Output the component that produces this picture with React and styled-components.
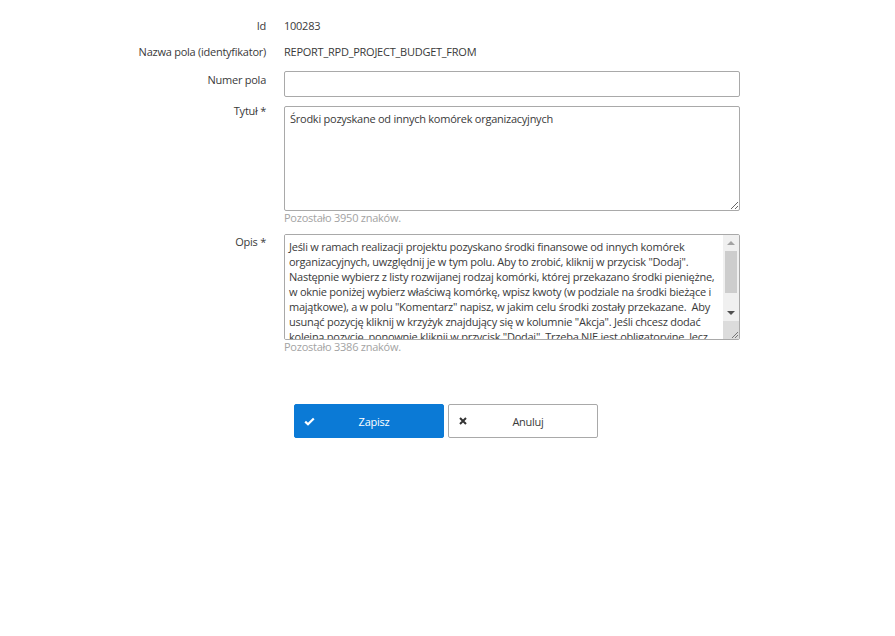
import React from 'react';
import styled, { createGlobalStyle } from 'styled-components';

const GlobalStyle = createGlobalStyle`
  html, body {
    margin: 0;
    padding: 0;
    background: #fff;
  }
  body {
    font-family: "Open Sans", "Liberation Sans", sans-serif;
    font-size: 11px;
    letter-spacing: -0.25px;
    color: #3a3a3a;
  }
  input, textarea, button {
    letter-spacing: inherit;
  }
`;

const Form = styled.div`
  padding-top: 17px;
  display: flex;
  flex-direction: column;
`;

const Row = styled.div`
  display: grid;
  grid-template-columns: 266px 456px;
  column-gap: 18px;
  align-items: start;
  margin-bottom: ${props => props.gap || 8}px;
`;

const Label = styled.div`
  text-align: right;
  line-height: 18px;
  margin-top: ${props => props.shift || 0}px;
`;

const Value = styled.div`
  line-height: 18px;
`;

const Field = styled.div`
  display: flex;
  flex-direction: column;
`;

const TextInput = styled.input`
  box-sizing: border-box;
  width: 456px;
  height: 26px;
  border: 1px solid #a9a9a9;
  border-radius: 2px;
  padding: 0 6px;
  font: inherit;
  color: inherit;
  outline: none;
`;

const TextArea = styled.textarea`
  box-sizing: border-box;
  width: 456px;
  height: ${props => props.h}px;
  border: 1px solid #a9a9a9;
  border-radius: 2px;
  padding: 4px 4px 4px 5px;
  font: inherit;
  line-height: 15px;
  color: inherit;
  outline: none;
  resize: vertical;
  display: block;
  margin: 0;
`;

const ScrollBox = styled.div`
  box-sizing: border-box;
  width: 456px;
  height: ${props => props.h}px;
  border: 1px solid #a9a9a9;
  border-radius: 2px;
  display: flex;
  overflow: hidden;
`;

const InnerArea = styled.textarea`
  flex: 1;
  min-width: 0;
  border: none;
  padding: 4px 2px 4px 4px;
  margin: 0;
  font: inherit;
  line-height: 15px;
  color: inherit;
  outline: none;
  resize: none;
  overflow: hidden;
  scrollbar-width: none;
`;

const Scrollbar = styled.div`
  width: 16px;
  display: flex;
  flex-direction: column;
  background: #f0f0f0;
`;

const ScrollButton = styled.div`
  height: 16px;
  display: flex;
  align-items: center;
  justify-content: center;
`;

const Track = styled.div`
  flex: 1;
  display: flex;
  flex-direction: column;
  padding: 0 2px 12px;
`;

const Thumb = styled.div`
  height: 42px;
  background: #cdcdcd;
`;

const Corner = styled.div`
  height: 18px;
  background: #dcdcdc;
  display: flex;
  align-items: flex-end;
  justify-content: flex-end;
`;

const Hint = styled.div`
  color: #a3a3a3;
  line-height: 14px;
`;

const Buttons = styled.div`
  display: flex;
  gap: 4px;
  margin-left: 294px;
  margin-top: 42px;
`;

const Button = styled.button`
  box-sizing: border-box;
  width: 150px;
  height: 34px;
  display: flex;
  align-items: center;
  padding: 0 10px 0 8px;
  border-radius: 2px;
  font: inherit;
  cursor: pointer;
  border: 1px solid ${props => (props.primary ? '#0b7ad6' : '#a9a9a9')};
  background: ${props => (props.primary ? '#0b7ad6' : '#fff')};
  color: ${props => (props.primary ? '#fff' : '#3a3a3a')};
`;

const ButtonIcon = styled.span`
  width: 12px;
  display: flex;
  align-items: center;
  justify-content: center;
`;

const ButtonText = styled.span`
  flex: 1;
  text-align: center;
`;

const Arrow = ({ up, color }) => (
  <svg width="8" height="4" viewBox="0 0 8 4">
    <path d={up ? 'M0 4 L4 0 L8 4 Z' : 'M0 0 L8 0 L4 4 Z'} fill={color} />
  </svg>
);

const Grip = () => (
  <svg width="10" height="10" viewBox="0 0 10 10">
    <path d="M9 3 L3 9 M9 6 L6 9" stroke="#777" strokeWidth="1" />
  </svg>
);

const CheckIcon = () => (
  <svg width="11" height="9" viewBox="0 0 11 9">
    <path d="M1.2 4.6 L4 7.3 L9.8 1.5" fill="none" stroke="#fff" strokeWidth="2.2" />
  </svg>
);

const TimesIcon = () => (
  <svg width="8" height="8" viewBox="0 0 8 8">
    <path d="M1 1 L7 7 M7 1 L1 7" fill="none" stroke="#333" strokeWidth="2" />
  </svg>
);

const opis =
  'Jeśli w ramach realizacji projektu pozyskano środki finansowe od innych komórek organizacyjnych, uwzględnij je w tym polu. Aby to zrobić, kliknij w przycisk "Dodaj". Następnie wybierz z listy rozwijanej rodzaj komórki, której przekazano środki pieniężne, w oknie poniżej wybierz właściwą komórkę, wpisz kwoty (w podziale na środki bieżące i majątkowe), a w polu "Komentarz" napisz, w jakim celu środki zostały przekazane.  Aby usunąć pozycję kliknij w krzyżyk znajdujący się w kolumnie "Akcja". Jeśli chcesz dodać kolejną pozycję, ponownie kliknij w przycisk "Dodaj". Trzeba NIE jest obligatoryjne, lecz zalecane w przypadku pozyskania środków od innych komórek organizacyjnych uczelni.';

export default function App() {
  return (
    <>
      <GlobalStyle />
      <Form>
        <Row>
          <Label>Id</Label>
          <Value>100283</Value>
        </Row>
        <Row gap={10}>
          <Label>Nazwa pola (identyfikator)</Label>
          <Value>REPORT_RPD_PROJECT_BUDGET_FROM</Value>
        </Row>
        <Row gap={9}>
          <Label>Numer pola</Label>
          <TextInput defaultValue="" />
        </Row>
        <Row gap={9}>
          <Label shift={-4}>Tytuł *</Label>
          <Field>
            <TextArea h={105} defaultValue="Środki pozyskane od innych komórek organizacyjnych" />
            <Hint>Pozostało 3950 znaków.</Hint>
          </Field>
        </Row>
        <Row gap={0}>
          <Label shift={-1}>Opis *</Label>
          <Field>
            <ScrollBox h={106}>
              <InnerArea defaultValue={opis} />
              <Scrollbar>
                <ScrollButton>
                  <Arrow up color="#a3a3a3" />
                </ScrollButton>
                <Track>
                  <Thumb />
                </Track>
                <ScrollButton>
                  <Arrow color="#505050" />
                </ScrollButton>
                <Corner>
                  <Grip />
                </Corner>
              </Scrollbar>
            </ScrollBox>
            <Hint>Pozostało 3386 znaków.</Hint>
          </Field>
        </Row>
        <Buttons>
          <Button primary>
            <ButtonIcon>
              <CheckIcon />
            </ButtonIcon>
            <ButtonText>Zapisz</ButtonText>
          </Button>
          <Button>
            <ButtonIcon>
              <TimesIcon />
            </ButtonIcon>
            <ButtonText>Anuluj</ButtonText>
          </Button>
        </Buttons>
      </Form>
    </>
  );
}
